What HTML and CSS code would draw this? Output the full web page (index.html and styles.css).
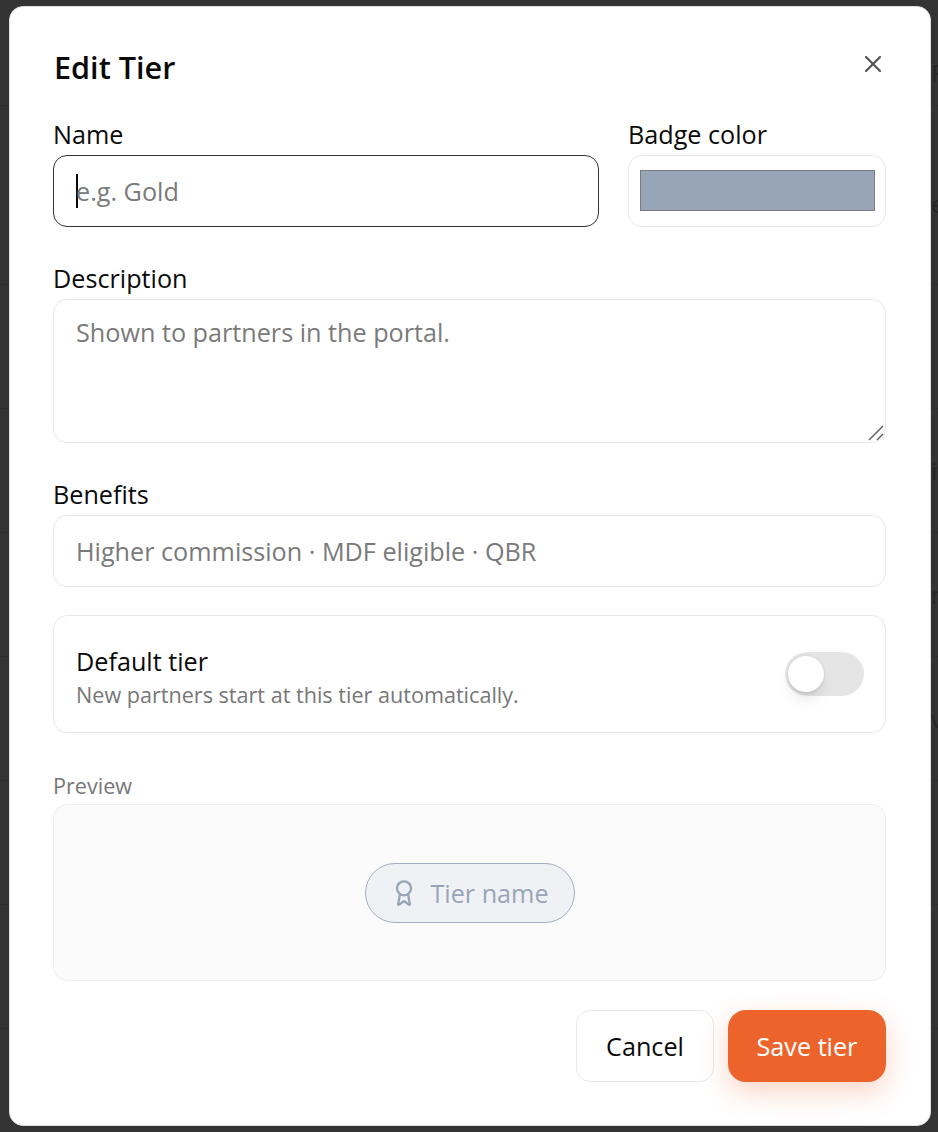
FILE: index.html
```html
<!DOCTYPE html>
<html>

<head>
    <title>Edit Tier</title>
    <link rel="stylesheet" href="styles.css">
</head>

<body>
    <!-- page behind the modal, only a sliver shows at the edge -->
    <div class="backdrop">
        <div class="bg-row bg-head"><span>Fa</span></div>
        <div class="bg-row bg-tall"><span>es</span></div>
        <div class="bg-row"></div>
        <div class="bg-row"><span>iv</span></div>
        <div class="bg-row"><span>n</span></div>
        <div class="bg-row"><span>v</span></div>
        <div class="bg-row"></div>
        <div class="bg-row"></div>
    </div>

    <div class="dialog">
        <div class="dialog-head">
            <h2>Edit Tier</h2>
            <button class="close" aria-label="Close">
                <svg width="28" height="28" viewBox="0 0 24 24" fill="none" stroke="currentColor" stroke-width="1.9" stroke-linecap="round">
                    <path d="M18 6 6 18" />
                    <path d="m6 6 12 12" />
                </svg>
            </button>
        </div>

        <div class="row">
            <div class="field grow">
                <label>Name</label>
                <div class="input focused"><span class="caret"></span><span class="placeholder">e.g. Gold</span></div>
            </div>
            <div class="field swatch-field">
                <label>Badge color</label>
                <div class="input swatch-box"><div class="swatch"></div></div>
            </div>
        </div>

        <div class="field">
            <label>Description</label>
            <div class="input textarea">
                <span class="placeholder">Shown to partners in the portal.</span>
                <svg class="grip" width="16" height="16" viewBox="0 0 16 16" fill="none" stroke="#5f5f5f" stroke-width="1.5">
                    <path d="M1 15 15 1" />
                    <path d="M9 15l6-6" />
                </svg>
            </div>
        </div>

        <div class="field last">
            <label>Benefits</label>
            <div class="input"><span class="placeholder">Higher commission · MDF eligible · QBR</span></div>
        </div>

        <div class="default-row">
            <div class="default-text">
                <div class="default-title">Default tier</div>
                <div class="default-note">New partners start at this tier automatically.</div>
            </div>
            <div class="toggle"><div class="knob"></div></div>
        </div>

        <div class="preview-label">Preview</div>
        <div class="preview">
            <div class="badge">
                <svg width="28" height="28" viewBox="0 0 24 24" fill="none" stroke="currentColor" stroke-width="2" stroke-linecap="round" stroke-linejoin="round">
                    <path d="m15.5 12.9 1.5 8.6a.5.5 0 0 1-.8.5l-3.6-2.7a1 1 0 0 0-1.2 0l-3.6 2.7a.5.5 0 0 1-.8-.5l1.5-8.6" />
                    <circle cx="12" cy="8" r="6" />
                </svg>
                <span>Tier name</span>
            </div>
        </div>

        <div class="actions">
            <button class="btn cancel">Cancel</button>
            <button class="btn save">Save tier</button>
        </div>
    </div>
</body>

</html>
```

FILE: styles.css
```css
* {
    box-sizing: border-box;
}

html,
body {
    height: 100%;
}

body {
    margin: 0;
    background-color: #333;
    font-family: "Open Sans", "Noto Sans", sans-serif;
    color: #0a0a0a;
    padding: 6px 7px 6px 9px;
    overflow: hidden;
}

.backdrop {
    position: absolute;
    top: 0;
    left: 0;
    right: 0;
    bottom: 0;
    overflow: hidden;
}

.bg-row {
    height: 124px;
    border-bottom: 1px solid #2e2e2e;
    display: flex;
    align-items: center;
    justify-content: flex-end;
    font-size: 24px;
    color: #252525;
}

.bg-row span {
    width: 7px;
    overflow: hidden;
    white-space: nowrap;
}

.bg-head {
    height: 106px;
    padding-top: 40px;
}

.bg-tall {
    height: 179px;
    padding-top: 16px;
}

.dialog {
    position: relative;
    height: 1120px;
    background-color: #fff;
    border: 1px solid #ddd;
    border-radius: 14px;
    padding: 0 44px 0 43px;
}

.dialog-head {
    display: flex;
    justify-content: space-between;
    height: 112px;
    padding-top: 36px;
}

h2 {
    margin: 0;
    padding-left: 1px;
    font-size: 30.6px;
    line-height: 48px;
    font-weight: 600;
}

.close {
    width: 28px;
    height: 28px;
    margin: 7px -1px 0 0;
    padding: 0;
    border: none;
    background: none;
    color: #555;
}

label {
    display: block;
    font-size: 25.2px;
    line-height: 31px;
    margin-bottom: 5px;
}

.row {
    display: flex;
    gap: 29px;
}

.grow {
    flex: 1;
}

.swatch-field {
    width: 258px;
}

.field {
    margin-bottom: 36px;
}

.last {
    margin-bottom: 28px;
}

.input {
    height: 72px;
    border: 1px solid #e8e8e8;
    border-radius: 14px;
    padding: 0 22px;
    display: flex;
    align-items: center;
    font-size: 25.2px;
    position: relative;
}

.focused {
    border-color: #333;
}

.caret {
    width: 2px;
    height: 34px;
    background-color: #0a0a0a;
    margin-right: -2px;
}

.placeholder {
    color: #7a7a7a;
}

.swatch-box {
    padding: 14px 10px 15px 11px;
}

.swatch {
    width: 100%;
    height: 41px;
    background-color: #98a5b8;
    border: 1px solid #7c7c7c;
}

.textarea {
    height: 144px;
    align-items: flex-start;
    padding-top: 15px;
}

.grip {
    position: absolute;
    right: 1px;
    bottom: 1px;
}

.default-row {
    height: 118px;
    border: 1px solid #e8e8e8;
    border-radius: 14px;
    padding: 0 21px 0 22px;
    display: flex;
    justify-content: space-between;
    align-items: center;
    margin-bottom: 40px;
}

.default-text {
    padding-top: 5px;
}

.default-title {
    font-size: 25.2px;
    line-height: 33px;
    margin-bottom: 3px;
}

.default-note {
    font-size: 21.6px;
    line-height: 28px;
    color: #777;
}

.toggle {
    width: 79px;
    height: 44px;
    border-radius: 22px;
    background-color: #e5e5e5;
    padding: 4px 3px;
}

.knob {
    width: 36px;
    height: 36px;
    border-radius: 50%;
    background-color: #fff;
    box-shadow: 0 10px 15px -3px rgba(0, 0, 0, 0.1), 0 4px 6px -4px rgba(0, 0, 0, 0.1), 0 0 3px rgba(0, 0, 0, 0.12);
}

.preview-label {
    font-size: 21.6px;
    line-height: 25px;
    color: #777;
    margin-bottom: 6px;
}

.preview {
    height: 177px;
    border: 1px solid #eee;
    border-radius: 14px;
    background-color: #fbfbfb;
    display: flex;
    align-items: center;
    justify-content: center;
    margin-bottom: 29px;
}

.badge {
    width: 210px;
    height: 60px;
    border: 1px solid #a3aec2;
    border-radius: 30px;
    background-color: #eff1f5;
    color: #98a5b8;
    display: flex;
    align-items: center;
    justify-content: center;
    gap: 12px;
    font-size: 25.2px;
}

.actions {
    display: flex;
    justify-content: flex-end;
    gap: 14px;
}

.btn {
    height: 72px;
    border-radius: 18px;
    font-family: inherit;
    font-size: 25.2px;
    cursor: pointer;
}

.cancel {
    width: 138px;
    background-color: #fff;
    border: 1px solid #e8e8e8;
    border-radius: 14px;
    color: #0a0a0a;
}

.save {
    width: 158px;
    background-color: #ec642c;
    border: none;
    color: #fff;
    box-shadow: 0 10px 28px rgba(238, 101, 45, 0.28);
}
```
